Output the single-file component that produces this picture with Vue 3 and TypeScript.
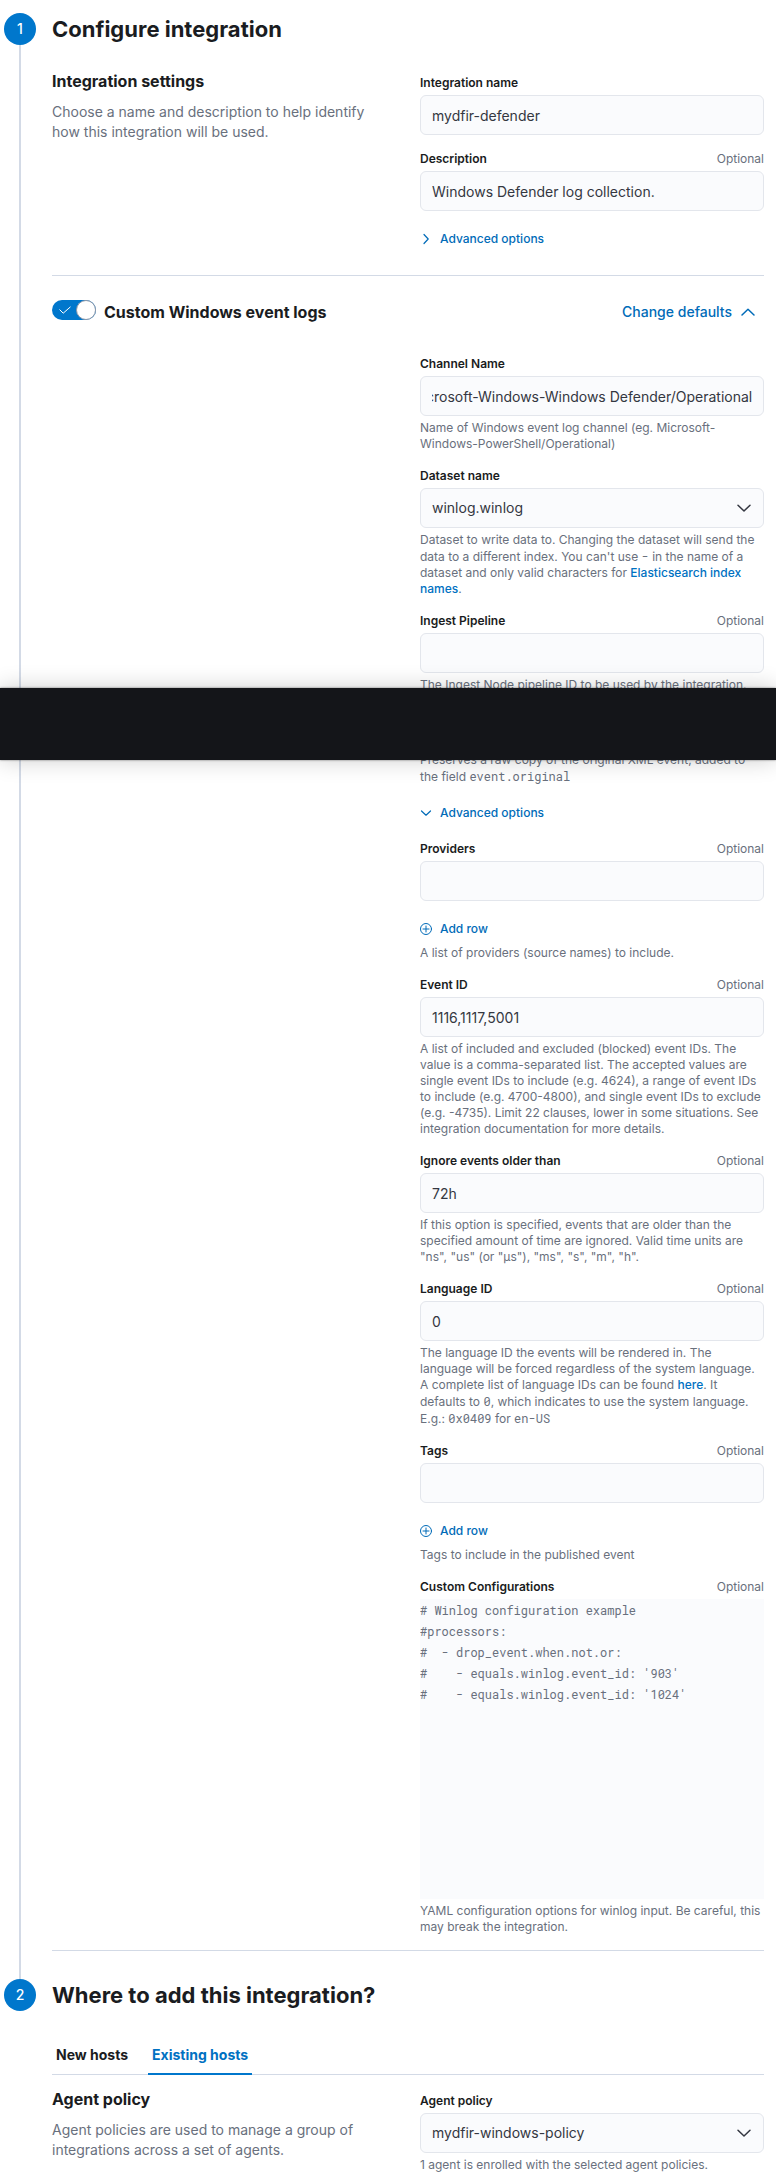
<script setup lang="ts">
import { onMounted, ref } from 'vue'

const integrationName = ref('mydfir-defender')
const description = ref('Windows Defender log collection.')
const channel = ref('Microsoft-Windows-Windows Defender/Operational')
const dataset = ref('winlog.winlog')
const pipeline = ref('')
const provider = ref('')
const eventId = ref('1116,1117,5001')
const ignoreOlder = ref('72h')
const languageId = ref('0')
const tag = ref('')
const policy = ref('mydfir-windows-policy')
const logsEnabled = ref(true)
const activeTab = ref('existing')
const tabs = [
  { id: 'new', name: 'New hosts' },
  { id: 'existing', name: 'Existing hosts' },
]
const customConfig = ref(
  [
    '# Winlog configuration example',
    '#processors:',
    '#  - drop_event.when.not.or:',
    "#    - equals.winlog.event_id: '903'",
    "#    - equals.winlog.event_id: '1024'",
  ].join('\n'),
)

const channelInput = ref<HTMLInputElement | null>(null)

// Keep the end of a long channel name in view.
onMounted(() => {
  const el = channelInput.value
  if (el) el.scrollLeft = el.scrollWidth
})
</script>

<template>
  <main class="page">
    <section class="step">
      <div class="rail">
        <span class="badge">1</span>
        <span class="line"></span>
      </div>
      <div class="body">
        <h2 class="step-title">Configure integration</h2>

        <div class="group first">
          <div class="intro">
            <h3 class="title">Integration settings</h3>
            <p class="lead">Choose a name and description to help identify how this integration will be used.</p>
          </div>
          <div class="fields">
            <div class="row">
              <div class="label-row"><label for="name">Integration name</label></div>
              <input id="name" v-model="integrationName" class="control" type="text" />
            </div>
            <div class="row">
              <div class="label-row"><label for="desc">Description</label><span>Optional</span></div>
              <input id="desc" v-model="description" class="control" type="text" />
            </div>
            <button class="link-button" type="button">
              <svg class="icon" viewBox="0 0 12 12"><path d="M4 1.5 8.2 6 4 10.5" /></svg>
              Advanced options
            </button>
          </div>
        </div>

        <hr class="rule" />

        <div class="stream-head">
          <label class="stream-toggle">
            <span class="switch">
              <input v-model="logsEnabled" type="checkbox" role="switch" />
              <svg class="tick" viewBox="0 0 12 8"><path d="M.5 3.5 4.2 7.2 11.5.8" /></svg>
            </span>
            <span class="title">Custom Windows event logs</span>
          </label>
          <button class="defaults-button" type="button">
            Change defaults
            <svg class="chevron" viewBox="0 0 16 16"><path d="M2 11 8 5.2 14 11" /></svg>
          </button>
        </div>

        <div class="group stream">
          <div class="intro"></div>
          <div class="fields">
            <div class="row">
              <div class="label-row"><label for="channel">Channel Name</label></div>
              <input id="channel" ref="channelInput" v-model="channel" class="control" type="text" />
              <p class="help">Name of Windows event log channel (eg. Microsoft-Windows-PowerShell/Operational)</p>
            </div>
            <div class="row">
              <div class="label-row"><label for="dataset">Dataset name</label></div>
              <div class="select">
                <select id="dataset" v-model="dataset" class="control">
                  <option>winlog.winlog</option>
                </select>
                <svg class="chevron" viewBox="0 0 16 16"><path d="M2 5.2 8 11l6-5.8" /></svg>
              </div>
              <p class="help">
                Dataset to write data to. Changing the dataset will send the data to a different index. You can't use
                <code>-</code> in the name of a dataset and only valid characters for
                <a href="#index-names">Elasticsearch index names</a>.
              </p>
            </div>
            <div class="row">
              <div class="label-row"><label for="pipeline">Ingest Pipeline</label><span>Optional</span></div>
              <input id="pipeline" v-model="pipeline" class="control" type="text" />
              <p class="help">The Ingest Node pipeline ID to be used by the integration.</p>
            </div>

            <div class="break-slot"><div class="break-band"></div></div>

            <p class="help preserve">
              Preserves a raw copy of the original XML event, added to the field <code>event.original</code>
            </p>

            <button class="link-button" type="button">
              <svg class="icon" viewBox="0 0 12 12"><path d="M1.5 4 6 8.2 10.5 4" /></svg>
              Advanced options
            </button>
            <div class="row">
              <div class="label-row"><label for="providers">Providers</label><span>Optional</span></div>
              <input id="providers" v-model="provider" class="control" type="text" />
              <button class="link-button add" type="button">
                <svg class="icon thin" viewBox="0 0 12 12"><circle cx="6" cy="6" r="5.5" /><path d="M6 3v6M3 6h6" /></svg>
                Add row
              </button>
              <p class="help">A list of providers (source names) to include.</p>
            </div>
            <div class="row">
              <div class="label-row"><label for="event-id">Event ID</label><span>Optional</span></div>
              <input id="event-id" v-model="eventId" class="control" type="text" />
              <p class="help">
                A list of included and excluded (blocked) event IDs. The value is a comma-separated list. The accepted
                values are single event IDs to include (e.g. 4624), a range of event IDs to include (e.g. 4700-4800),
                and single event IDs to exclude (e.g. -4735). Limit 22 clauses, lower in some situations. See
                integration documentation for more details.
              </p>
            </div>
            <div class="row">
              <div class="label-row"><label for="older">Ignore events older than</label><span>Optional</span></div>
              <input id="older" v-model="ignoreOlder" class="control" type="text" />
              <p class="help">
                If this option is specified, events that are older than the specified amount of time are ignored. Valid
                time units are "ns", "us" (or "µs"), "ms", "s", "m", "h".
              </p>
            </div>
            <div class="row">
              <div class="label-row"><label for="language">Language ID</label><span>Optional</span></div>
              <input id="language" v-model="languageId" class="control" type="text" />
              <p class="help">
                The language ID the events will be rendered in. The language will be forced regardless of the system
                language. A complete list of language IDs can be found <a href="#language-ids">here</a>. It defaults to
                <code>0</code>, which indicates to use the system language. E.g.: <code>0x0409</code> for
                <code>en-US</code>
              </p>
            </div>
            <div class="row">
              <div class="label-row"><label for="tags">Tags</label><span>Optional</span></div>
              <input id="tags" v-model="tag" class="control" type="text" />
              <button class="link-button add" type="button">
                <svg class="icon thin" viewBox="0 0 12 12"><circle cx="6" cy="6" r="5.5" /><path d="M6 3v6M3 6h6" /></svg>
                Add row
              </button>
              <p class="help">Tags to include in the published event</p>
            </div>
            <div class="row">
              <div class="label-row"><label for="config">Custom Configurations</label><span>Optional</span></div>
              <textarea id="config" v-model="customConfig" class="editor" spellcheck="false"></textarea>
              <p class="help">YAML configuration options for winlog input. Be careful, this may break the integration.</p>
            </div>
          </div>
        </div>

        <hr class="rule last" />
      </div>
    </section>

    <section class="step">
      <div class="rail"><span class="badge">2</span></div>
      <div class="body">
        <h2 class="step-title">Where to add this integration?</h2>
        <div class="tabs" role="tablist">
          <button
            v-for="t in tabs"
            :key="t.id"
            type="button"
            role="tab"
            class="tab"
            :class="{ active: activeTab === t.id }"
            :aria-selected="activeTab === t.id"
            @click="activeTab = t.id"
          >
            {{ t.name }}
          </button>
        </div>
        <div class="group policy">
          <div class="intro">
            <h3 class="title">Agent policy</h3>
            <p class="lead">Agent policies are used to manage a group of integrations across a set of agents.</p>
          </div>
          <div class="fields">
            <div class="row">
              <div class="label-row"><label for="policy">Agent policy</label></div>
              <div class="select">
                <select id="policy" v-model="policy" class="control">
                  <option>mydfir-windows-policy</option>
                </select>
                <svg class="chevron" viewBox="0 0 16 16"><path d="M2 5.2 8 11l6-5.8" /></svg>
              </div>
              <p class="help">1 agent is enrolled with the selected agent policies.</p>
            </div>
          </div>
        </div>
      </div>
    </section>
  </main>
</template>

<style>
body {
  background: #fff;
}
</style>

<style scoped>
.page {
  position: relative;
  box-sizing: border-box;
  padding: 13px 12px 11px 4px;
  background: #fff;
  color: #343741;
  font-family: Inter, 'Liberation Sans', sans-serif;
  font-size: 14px;
  line-height: 20px;
}
.page * {
  box-sizing: border-box;
}
h2,
h3,
p {
  margin: 0;
}
button,
input,
select,
textarea {
  margin: 0;
  font: inherit;
}
.step {
  display: flex;
  gap: 16px;
}
.rail {
  display: flex;
  flex: none;
  flex-direction: column;
  align-items: center;
  width: 32px;
}
.badge {
  display: flex;
  align-items: center;
  justify-content: center;
  width: 32px;
  height: 32px;
  border-radius: 50%;
  background: #0077cc;
  color: #fff;
  font-weight: 500;
}
.line {
  flex: 1;
  width: 2px;
  background: #d3dae6;
}
.body {
  flex: 1;
  min-width: 0;
}
.step-title {
  color: #1a1c21;
  font-size: 22px;
  font-weight: 700;
  line-height: 32px;
}
.title {
  color: #1a1c21;
  font-size: 16px;
  font-weight: 700;
  line-height: 24px;
}
.lead {
  margin-top: 9px;
  color: #69707d;
}
.group {
  display: grid;
  grid-template-columns: 1fr 1fr;
  column-gap: 24px;
}
.group.first {
  padding: 24px 0;
}
.first .fields,
.policy .fields {
  padding-top: 6px;
}
.fields {
  display: flex;
  flex-direction: column;
  align-items: stretch;
  gap: 16px;
  min-width: 0;
}
.label-row {
  display: flex;
  justify-content: space-between;
  margin-bottom: 4px;
  color: #69707d;
  font-size: 12px;
  line-height: 16px;
}
.label-row label {
  color: #1a1c21;
  font-weight: 600;
}
.control {
  display: block;
  width: 100%;
  height: 40px;
  padding: 0 11px;
  border: 1px solid #e3e6ec;
  border-radius: 6px;
  outline: none;
  background: #fafbfd;
  color: #343741;
  appearance: none;
}
.select {
  position: relative;
}
.select .control {
  padding-right: 40px;
}
.select .chevron {
  position: absolute;
  top: 12px;
  right: 12px;
  color: #343741;
  pointer-events: none;
}
.chevron {
  width: 16px;
  height: 16px;
  fill: none;
  stroke: currentColor;
  stroke-width: 1.5;
  stroke-linecap: round;
  stroke-linejoin: round;
}
.help {
  margin-top: 4px;
  color: #69707d;
  font-size: 12px;
  line-height: 16px;
}
.help a {
  color: #0071c2;
  font-weight: 500;
  text-decoration: none;
}
code {
  font-family: 'Roboto Mono', 'DejaVu Sans Mono', monospace;
  font-size: 12px;
}
.link-button {
  display: flex;
  align-items: center;
  align-self: flex-start;
  gap: 8px;
  height: 24px;
  padding: 0;
  border: 0;
  background: none;
  color: #006bb8;
  font-size: 12px;
  font-weight: 500;
  line-height: 16px;
}
.link-button.add {
  margin-top: 16px;
}
.icon {
  width: 12px;
  height: 12px;
  fill: none;
  stroke: currentColor;
  stroke-width: 1.2;
  stroke-linecap: round;
  stroke-linejoin: round;
}
.icon.thin {
  stroke-width: 1;
}
.rule {
  height: 1px;
  margin: 0;
  border: 0;
  background: #d3dae6;
}
.rule.last {
  margin: 15px 0 28px;
}
.stream-head {
  display: flex;
  align-items: center;
  justify-content: space-between;
  height: 40px;
  margin: 16px 0 24px;
}
.stream-toggle {
  display: flex;
  align-items: center;
  gap: 8px;
}
.switch {
  position: relative;
  display: flex;
  width: 44px;
  height: 20px;
  margin-bottom: 4px;
}
.switch input {
  display: flex;
  width: 44px;
  height: 20px;
  border-radius: 10px;
  background: #98a2b3;
  appearance: none;
}
.switch input:checked {
  justify-content: flex-end;
  background: #0077cc;
}
.switch input::before {
  width: 20px;
  height: 20px;
  box-sizing: border-box;
  border: 1px solid #8d97a8;
  border-radius: 50%;
  background: #fff;
  content: '';
}
.tick {
  position: absolute;
  top: 6px;
  left: 7px;
  width: 12px;
  height: 8px;
  fill: none;
  stroke: #fff;
  stroke-width: 1;
  pointer-events: none;
}
.defaults-button {
  display: flex;
  align-items: center;
  gap: 8px;
  height: 40px;
  padding: 0 8px;
  border: 0;
  background: none;
  color: #006bb8;
  font-weight: 500;
}
.break-slot {
  height: 59px;
  margin: -16px 0;
}
.break-band {
  position: absolute;
  right: 0;
  left: 0;
  height: 72px;
  margin-top: -5px;
  background: #141519;
  box-shadow: 0 0 22px rgba(0, 0, 0, 0.2), 0 0 2px rgba(0, 0, 0, 0.5);
}
.help.preserve {
  margin-top: 0;
}
.editor {
  display: block;
  width: 100%;
  height: 300px;
  padding: 1px 0;
  border: 0;
  outline: none;
  background: #fafbfd;
  color: #69707d;
  font-family: 'Roboto Mono', 'DejaVu Sans Mono', monospace;
  font-size: 12px;
  line-height: 21px;
  resize: none;
}
.tabs {
  display: flex;
  gap: 16px;
  margin-top: 24px;
  box-shadow: inset 0 -1px #d3dae6;
}
.tab {
  height: 40px;
  padding: 0 4px;
  border: 0;
  background: none;
  color: #1a1c21;
  font-weight: 700;
}
.tab.active {
  box-shadow: inset 0 -2px #0077cc;
  color: #0071c2;
}
.group.policy {
  padding-top: 12px;
}
</style>
